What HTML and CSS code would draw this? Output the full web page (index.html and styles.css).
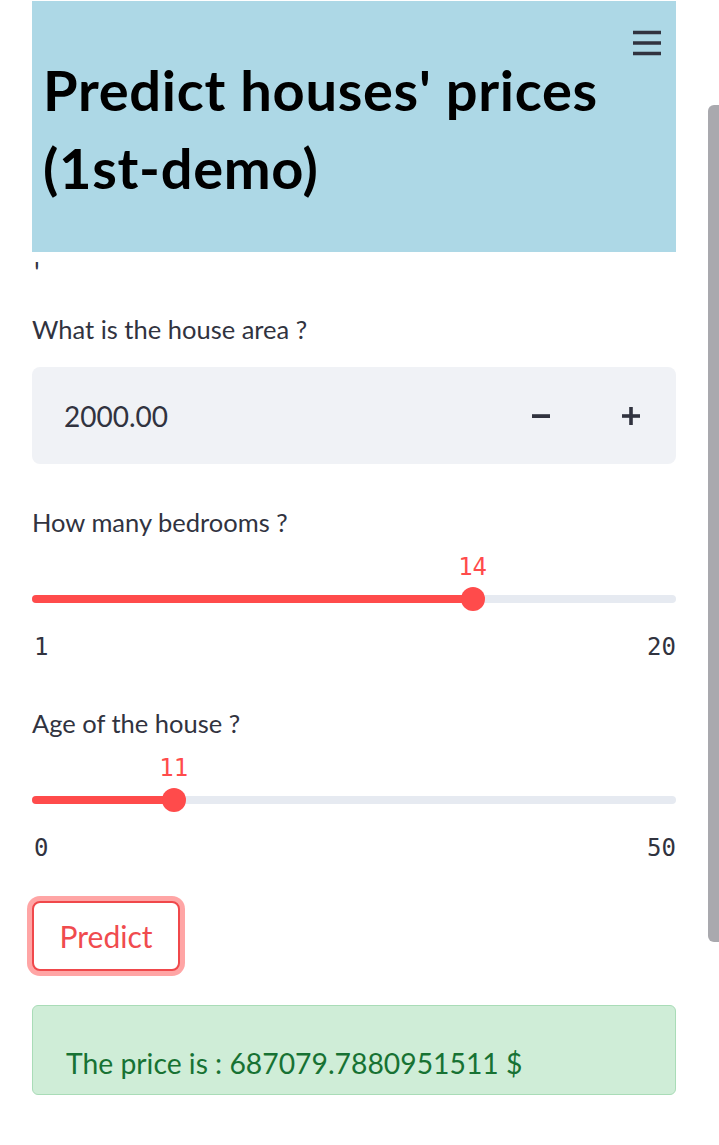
FILE: index.html
```html
<!DOCTYPE html>
<html lang="en">
<head>
<meta charset="utf-8">
<title>Predict houses' prices</title>
<link rel="stylesheet" href="styles.css">
</head>
<body>
<main class="app">
  <header class="hero">
    <h1 class="hero-title">Predict houses' prices (1st-demo)</h1>
    <button class="menu" aria-label="Menu">
      <svg width="30" height="26" viewBox="0 0 30 26"><path d="M1 2.5h28M1 13h28M1 23.5h28" stroke="#31333f" stroke-width="3.6" fill="none"/></svg>
    </button>
  </header>
  <p class="tick">'</p>

  <section class="field">
    <label class="label">What is the house area ?</label>
    <div class="number">
      <span class="number-value">2000.00</span>
      <span class="step">
        <svg width="18" height="18" viewBox="0 0 18 18"><rect x="0" y="7.2" width="18" height="3.8" fill="#31333f"/></svg>
      </span>
      <span class="step">
        <svg width="18" height="18" viewBox="0 0 18 18"><rect x="0" y="7.2" width="18" height="3.6" fill="#31333f"/><rect x="7.2" y="0" width="3.6" height="18" fill="#31333f"/></svg>
      </span>
    </div>
  </section>

  <section class="field slider-field">
    <label class="label">How many bedrooms ?</label>
    <div class="slider">
      <div class="track">
        <div class="fill" style="width:68.42%"><span class="thumb"><span class="thumb-value">14</span></span></div>
      </div>
      <div class="ticks"><span>1</span><span>20</span></div>
    </div>
  </section>

  <section class="field slider-field">
    <label class="label">Age of the house ?</label>
    <div class="slider">
      <div class="track">
        <div class="fill" style="width:22%"><span class="thumb"><span class="thumb-value">11</span></span></div>
      </div>
      <div class="ticks"><span>0</span><span>50</span></div>
    </div>
  </section>

  <div class="actions">
    <button class="predict">Predict</button>
  </div>

  <div class="success">The price is : 687079.7880951511 $</div>
</main>
<div class="scrollbar"></div>
</body>
</html>
```

FILE: styles.css
```css
html, body {
  margin: 0;
  padding: 0;
  background: #ffffff;
}
body {
  font-family: Lato, "Noto Sans", sans-serif;
  color: #31333f;
  width: 719px;
  height: 1145px;
  overflow: hidden;
}
.app {
  padding: 1px 43px 0 32px;
  display: flex;
  flex-direction: column;
}
.hero {
  position: relative;
  background: #add8e6;
  height: 251px;
  padding: 0 50px 0 11px;
  box-sizing: border-box;
}
.hero-title {
  margin: 0;
  padding-top: 50px;
  font-size: 56px;
  line-height: 78px;
  font-weight: 700;
  color: #000;
  letter-spacing: 0.7px;
}
.menu {
  position: absolute;
  top: 29px;
  right: 14px;
  border: 0;
  padding: 0;
  background: none;
  display: flex;
}
.tick {
  margin: 8px 0 0 2px;
  font-size: 28px;
  line-height: 24px;
  color: #31333f;
}
.field {
  display: flex;
  flex-direction: column;
}
.label {
  font-size: 25.5px;
  line-height: 30px;
  margin-top: 30px;
}
.number {
  margin-top: 23px;
  height: 97px;
  background: #f0f2f6;
  border-radius: 8px;
  display: flex;
  align-items: center;
  padding-left: 32px;
}
.number-value {
  flex: 1;
  font-size: 28px;
  color: #31333f;
}
.step {
  width: 90px;
  display: flex;
  justify-content: center;
}
.slider-field .label {
  margin-top: 43px;
}
.slider {
  display: flex;
  flex-direction: column;
  padding-top: 58px;
  padding-bottom: 4px;
}
.track {
  height: 8px;
  border-radius: 4px;
  background: #e6eaf1;
  display: flex;
}
.fill {
  position: relative;
  height: 8px;
  border-radius: 4px;
  background: #ff4b4b;
}
.thumb {
  position: absolute;
  right: -12px;
  top: -8px;
  width: 24px;
  height: 24px;
  border-radius: 50%;
  background: #ff4b4b;
}
.thumb-value {
  position: absolute;
  bottom: 30px;
  left: 50%;
  transform: translateX(-50%);
  font-family: "DejaVu Sans Mono", "Liberation Mono", monospace;
  font-size: 24px;
  line-height: 28px;
  color: #ff4b4b;
}
.ticks {
  display: flex;
  justify-content: space-between;
  margin-top: 30px;
  font-family: "DejaVu Sans Mono", "Liberation Mono", monospace;
  font-size: 24px;
  line-height: 28px;
  color: #31333f;
}
.ticks span:first-child {
  padding-left: 2px;
}
.actions {
  margin-top: 35px;
  display: flex;
}
.predict {
  font-family: Lato, "Noto Sans", sans-serif;
  font-size: 30px;
  color: #f04b4e;
  background: #fff;
  border: 2px solid #f0484b;
  border-radius: 8px;
  box-shadow: 0 0 0 5px rgba(255, 75, 75, 0.5);
  width: 148px;
  height: 70px;
  padding: 0;
}
.success {
  margin-top: 34px;
  height: 90px;
  box-sizing: border-box;
  background: #cfedd7;
  border: 1.5px solid #a9dcb7;
  border-radius: 6px;
  padding: 37px 0 0 33px;
  font-size: 28.3px;
  line-height: 40px;
  color: #177233;
}
.scrollbar {
  position: absolute;
  left: 708px;
  top: 105px;
  width: 11px;
  height: 837px;
  border-radius: 6px 0 0 6px;
  background: #a9a9ae;
}
```
